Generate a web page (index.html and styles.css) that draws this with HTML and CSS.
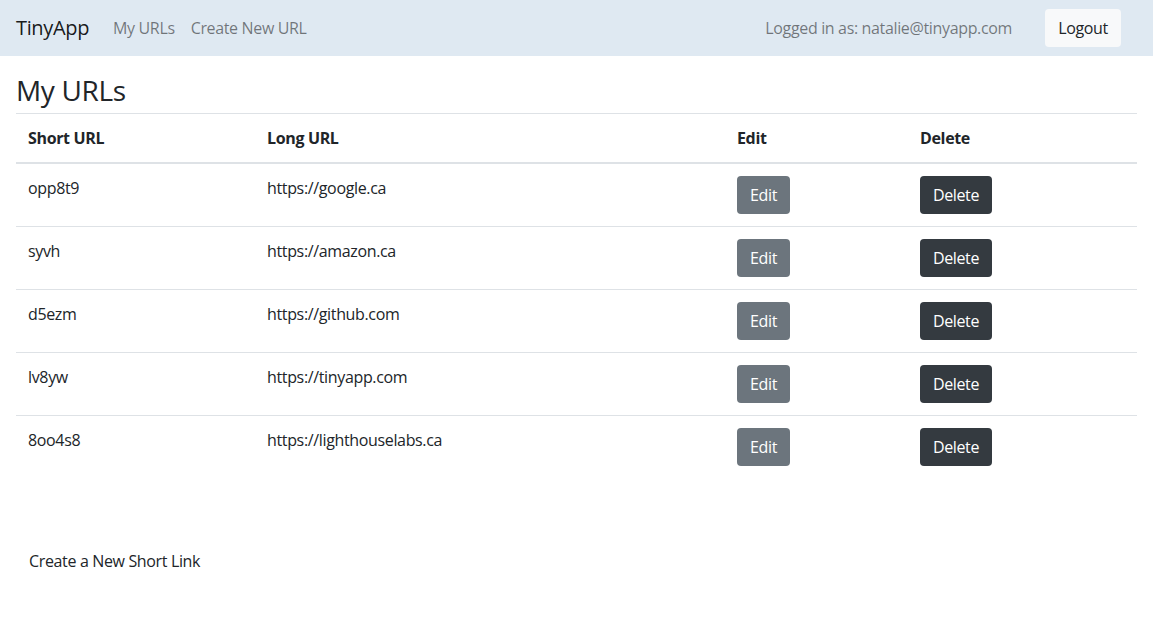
FILE: index.html
```html
<!DOCTYPE html>
<html lang="en">
<head>
<meta charset="utf-8">
<title>TinyApp</title>
<link rel="stylesheet" href="styles.css">
</head>
<body>
<nav class="navbar">
  <a class="brand" href="#">TinyApp</a>
  <div class="nav-links">
    <a class="nav-link" href="#">My URLs</a>
    <a class="nav-link" href="#">Create New URL</a>
  </div>
  <div class="nav-right">
    <span class="logged">Logged in as: natalie@tinyapp.com</span>
    <button class="btn btn-light">Logout</button>
  </div>
</nav>
<main class="main">
  <h3 class="title">My URLs</h3>
  <table class="table">
    <thead>
      <tr>
        <th class="c-short">Short URL</th>
        <th class="c-long">Long URL</th>
        <th class="c-edit">Edit</th>
        <th class="c-del">Delete</th>
      </tr>
    </thead>
    <tbody>
      <tr><td>opp8t9</td><td>https://google.ca</td><td><button class="btn btn-edit">Edit</button></td><td><button class="btn btn-delete">Delete</button></td></tr>
      <tr><td>syvh</td><td>https://amazon.ca</td><td><button class="btn btn-edit">Edit</button></td><td><button class="btn btn-delete">Delete</button></td></tr>
      <tr><td>d5ezm</td><td>https://github.com</td><td><button class="btn btn-edit">Edit</button></td><td><button class="btn btn-delete">Delete</button></td></tr>
      <tr><td>lv8yw</td><td>https://tinyapp.com</td><td><button class="btn btn-edit">Edit</button></td><td><button class="btn btn-delete">Delete</button></td></tr>
      <tr><td>8oo4s8</td><td>https://lighthouselabs.ca</td><td><button class="btn btn-edit">Edit</button></td><td><button class="btn btn-delete">Delete</button></td></tr>
    </tbody>
  </table>
  <div class="footer-link">
    <a href="#">Create a New Short Link</a>
  </div>
</main>
</body>
</html>
```
FILE: styles.css
```css
* { box-sizing: border-box; }
html, body { margin: 0; padding: 0; }
body {
  font-family: "Open Sans", "Noto Sans", sans-serif;
  font-size: 16px;
  line-height: 1.5;
  letter-spacing: -0.35px;
  color: #212529;
  background: #fff;
}
a { text-decoration: none; }
.navbar {
  display: flex;
  align-items: center;
  height: 56px;
  padding: 8px 32px 8px 16px;
  background: #dfe9f2;
}
.brand {
  font-size: 20px;
  color: rgba(0,0,0,.9);
  margin-right: 16px;
  line-height: 30px;
}
.nav-links { display: flex; }
.nav-link {
  color: rgba(0,0,0,.5);
  padding: 8px;
}
.nav-right {
  margin-left: auto;
  display: flex;
  align-items: center;
  gap: 33px;
}
.logged { color: rgba(0,0,0,.5); }
.btn {
  font-family: inherit;
  font-size: 16px;
  letter-spacing: -0.35px;
  line-height: 24px;
  height: 38px;
  padding: 6px 12px;
  border: 1px solid transparent;
  border-radius: 4px;
  text-align: center;
  cursor: pointer;
}
.btn-light { background: #f8f9fa; color: #212529; width: 76px; }
.btn-edit { background: #6c757d; color: #fff; width: 53px; padding: 6px 0; }
.btn-delete { background: #343a40; color: #fff; width: 72px; padding: 6px 0; }
.main { padding: 16px; }
.title {
  font-size: 28px;
  font-weight: 500;
  line-height: 32px;
  margin: 2px 0 7px;
}
.table {
  width: 100%;
  border-collapse: collapse;
  table-layout: fixed;
}
.table th, .table td {
  padding: 12px;
  text-align: left;
  vertical-align: top;
  border-top: 1px solid #dee2e6;
}
.table th {
  font-weight: 700;
  border-bottom: 2px solid #dee2e6;
}
.c-short { width: 239px; }
.c-long { width: 470px; }
.c-edit { width: 183px; }
.footer-link { padding: 71px 13px 0; }
.footer-link a { color: #212529; }
```
